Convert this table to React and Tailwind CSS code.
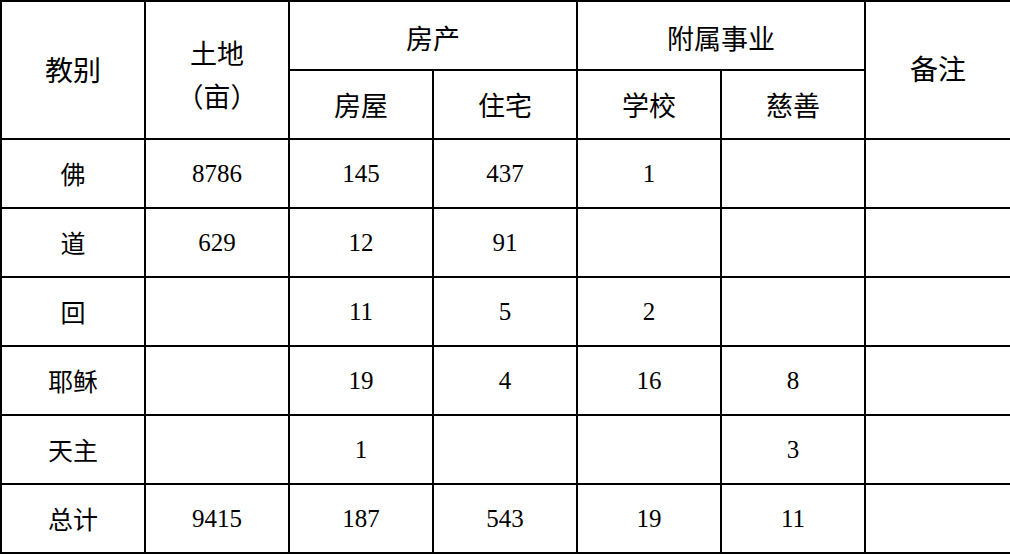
export default function App() {
  const rows = [
    ["佛", "8786", "145", "437", "1", "", ""],
    ["道", "629", "12", "91", "", "", ""],
    ["回", "", "11", "5", "2", "", ""],
    ["耶稣", "", "19", "4", "16", "8", ""],
    ["天主", "", "1", "", "", "3", ""],
    ["总计", "9415", "187", "543", "19", "11", ""],
  ];
  const cjk = "font-['Liberation_Serif','Noto_Sans_CJK_SC',serif]";
  return (
    <div className="w-[1010px] h-[554px] bg-white overflow-hidden">
      <table className={`w-[1010px] h-[554px] table-fixed border-collapse text-black ${cjk}`}>
        <colgroup>
          <col className="w-[144px]" />
          <col className="w-[144px]" />
          <col className="w-[144px]" />
          <col className="w-[144px]" />
          <col className="w-[144px]" />
          <col className="w-[144px]" />
          <col className="w-[146px]" />
        </colgroup>
        <thead>
          <tr className="h-[69px]">
            <th rowSpan={2} className="border-2 border-black font-normal text-[28px] pt-[3px]">教别</th>
            <th rowSpan={2} className="border-2 border-black font-normal text-[27px] leading-[43px] pt-[13px]">
              <div>土地</div>
              <div>（亩）</div>
            </th>
            <th colSpan={2} className="border-2 border-black font-normal text-[27px] pt-[9px]">房产</th>
            <th colSpan={2} className="border-2 border-black font-normal text-[27px] pt-[9px]">附属事业</th>
            <th rowSpan={2} className="border-2 border-black font-normal text-[28px] pt-[2px]">备注</th>
          </tr>
          <tr className="h-[69px]">
            <th className="border-2 border-black font-normal text-[27px] pt-[6px]">房屋</th>
            <th className="border-2 border-black font-normal text-[27px] pt-[6px]">住宅</th>
            <th className="border-2 border-black font-normal text-[27px] pt-[6px]">学校</th>
            <th className="border-2 border-black font-normal text-[27px] pt-[6px]">慈善</th>
          </tr>
        </thead>
        <tbody>
          {rows.map((r, i) => (
            <tr key={i} className="h-[69px]">
              {r.map((c, j) => (
                <td key={j} className={`border-2 border-black text-center ${j === 0 ? "text-[25px] pt-[4px]" : "text-[25px] pt-0"}`}>{c}</td>
              ))}
            </tr>
          ))}
        </tbody>
      </table>
    </div>
  );
}
